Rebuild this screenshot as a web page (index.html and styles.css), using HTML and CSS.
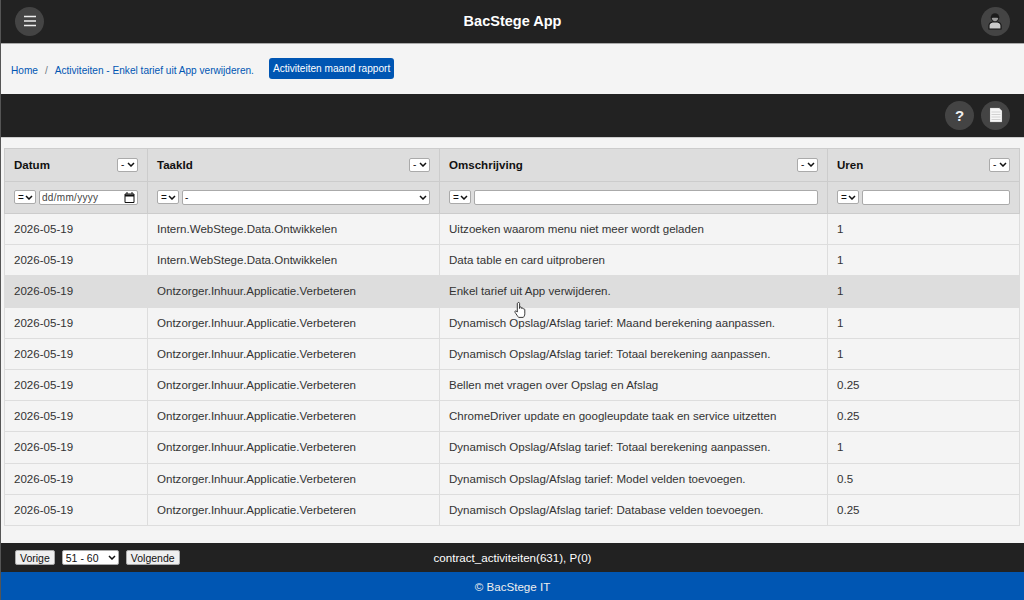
FILE: index.html
```html
<!DOCTYPE html>
<html lang="nl">
<head>
    <meta charset="UTF-8">
    <meta name="viewport" content="width=device-width, initial-scale=1.0">
    <title>BacStege App</title>
    <link rel="stylesheet" href="styles.css">
</head>
<body>
    <header class="app-header">
        <button class="round-btn" aria-label="Menu">
            <svg width="12" height="12" viewBox="0 0 12 12"><path d="M0 1.500h12M0 6h12M0 10.500h12" stroke="#eee" stroke-width="1.700" fill="none"/></svg>
        </button>
        <h1 class="app-title">BacStege App</h1>
        <button class="round-btn" aria-label="Account">
            <svg width="16" height="18" viewBox="0 0 16 18"><path d="M2 17v-3.500c0-2 1.500-3 3.500-3.500h5c2 .5 3.500 1.500 3.500 3.500V17z" fill="#c9c9c9" stroke="#111" stroke-width="1.100"/><circle cx="8" cy="5.500" r="4.300" fill="#1c1c1c"/><path d="M4.800 6c1.500-.2 4.800-.2 6.400 0-.1 2-1.400 3.200-3.200 3.200S4.900 8 4.800 6z" fill="#9a9a9a"/></svg>
        </button>
    </header>

    <nav class="breadcrumb">
        <a href="#">Home</a>
        <span class="sep">/</span>
        <a href="#">Activiteiten - Enkel tarief uit App verwijderen.</a>
        <a href="#" class="report-btn">Activiteiten maand rapport</a>
    </nav>

    <div class="toolbar">
        <button class="round-btn help" aria-label="Help">?</button>
        <button class="round-btn" aria-label="Document">
            <svg width="14" height="16" viewBox="0 0 14 16"><path d="M.6.600h9.600l3.200 3.200v11.600H.6z" fill="#f6f6f6" stroke="#111" stroke-width=".6"/><path d="M2.500 5h9M2.500 7.500h9M2.500 10h9M2.500 12.500h9" stroke="#d2d2d2"/></svg>
        </button>
    </div>

    <main class="content">
        <table class="data-table">
            <colgroup>
                <col class="col-date"><col class="col-task"><col class="col-desc"><col>
            </colgroup>
            <thead>
                <tr class="head-row">
                    <th><div class="th-inner">Datum <select class="mini"><option>-</option></select></div></th>
                    <th><div class="th-inner">TaakId <select class="mini"><option>-</option></select></div></th>
                    <th><div class="th-inner">Omschrijving <select class="mini"><option>-</option></select></div></th>
                    <th><div class="th-inner">Uren <select class="mini"><option>-</option></select></div></th>
                </tr>
                <tr class="filter-row">
                    <th><div class="filter">
                        <select class="op"><option>=</option></select>
                        <div class="date-field"><input type="text" value="dd/mm/yyyy" aria-label="Datum">
                            <svg width="11" height="11" viewBox="0 0 11 11" fill="none" stroke="#111"><path d="M1 2h9v8.500H1z"/><path d="M1 3.500h9" stroke-width="2"/><path d="M3 0v2M8 0v2"/></svg>
                        </div>
                    </div></th>
                    <th><div class="filter">
                        <select class="op"><option>=</option></select>
                        <select class="grow"><option>-</option></select>
                    </div></th>
                    <th><div class="filter">
                        <select class="op"><option>=</option></select>
                        <input class="grow" type="text">
                    </div></th>
                    <th><div class="filter">
                        <select class="op"><option>=</option></select>
                        <input class="grow" type="text">
                    </div></th>
                </tr>
            </thead>
            <tbody>
                <tr><td>2026-05-19</td><td>Intern.WebStege.Data.Ontwikkelen</td><td>Uitzoeken waarom menu niet meer wordt geladen</td><td>1</td></tr>
                <tr><td>2026-05-19</td><td>Intern.WebStege.Data.Ontwikkelen</td><td>Data table en card uitproberen</td><td>1</td></tr>
                <tr class="hover"><td>2026-05-19</td><td>Ontzorger.Inhuur.Applicatie.Verbeteren</td><td>Enkel tarief uit App verwijderen.</td><td>1</td></tr>
                <tr><td>2026-05-19</td><td>Ontzorger.Inhuur.Applicatie.Verbeteren</td><td>Dynamisch Opslag/Afslag tarief: Maand berekening aanpassen.</td><td>1</td></tr>
                <tr><td>2026-05-19</td><td>Ontzorger.Inhuur.Applicatie.Verbeteren</td><td>Dynamisch Opslag/Afslag tarief: Totaal berekening aanpassen.</td><td>1</td></tr>
                <tr><td>2026-05-19</td><td>Ontzorger.Inhuur.Applicatie.Verbeteren</td><td>Bellen met vragen over Opslag en Afslag</td><td>0.25</td></tr>
                <tr><td>2026-05-19</td><td>Ontzorger.Inhuur.Applicatie.Verbeteren</td><td>ChromeDriver update en googleupdate taak en service uitzetten</td><td>0.25</td></tr>
                <tr><td>2026-05-19</td><td>Ontzorger.Inhuur.Applicatie.Verbeteren</td><td>Dynamisch Opslag/Afslag tarief: Totaal berekening aanpassen.</td><td>1</td></tr>
                <tr><td>2026-05-19</td><td>Ontzorger.Inhuur.Applicatie.Verbeteren</td><td>Dynamisch Opslag/Afslag tarief: Model velden toevoegen.</td><td>0.5</td></tr>
                <tr><td>2026-05-19</td><td>Ontzorger.Inhuur.Applicatie.Verbeteren</td><td>Dynamisch Opslag/Afslag tarief: Database velden toevoegen.</td><td>0.25</td></tr>
            </tbody>
        </table>
        <svg class="hand-cursor" width="13" height="18" viewBox="0 0 13 17"><path d="M4 1.200c.8-.6 1.600-.2 1.600.8v5l.2-1.200c.7-.7 1.600-.4 1.700.5l.1.600c.7-.6 1.500-.3 1.600.6.7-.4 1.500-.1 1.600.8v4c0 1.600-.8 2.800-1.500 3.600H4.600C3.600 14.800 2.400 12.800 1 10.800c-.5-.8.3-1.800 1.400-1.200l.9 1V2.200c0-.4.2-.8.700-1z" fill="#fff" stroke="#222" stroke-width=".9"/></svg>
    </main>

    <div class="pager">
        <div class="pager-controls">
            <button>Vorige</button>
            <select><option>51 - 60</option></select>
            <button>Volgende</button>
        </div>
        <span class="pager-info">contract_activiteiten(631), P(0)</span>
    </div>

    <footer class="app-footer">© BacStege IT</footer>
</body>
</html>
```

FILE: styles.css
```css
* {
    box-sizing: border-box;
}
html, body {
    height: 100%;
}
body {
    margin: 0;
    display: flex;
    flex-direction: column;
    font-family: "Liberation Sans", Arial, sans-serif;
    font-size: 12px;
    color: #222;
    background: #f4f4f4;
    border-left: 1px solid #555;
    overflow: hidden;
}
.app-header {
    height: 44px;
    flex: none;
    display: flex;
    align-items: center;
    justify-content: space-between;
    padding: 0 14px 1px 14px;
    background: #222;
    border-bottom: 1px solid #aaa;
}
.app-title {
    margin: 0;
    font-size: 14.5px;
    font-weight: bold;
    color: #fff;
}
.round-btn {
    width: 29px;
    height: 29px;
    padding: 0;
    display: flex;
    align-items: center;
    justify-content: center;
    border: 0;
    border-radius: 50%;
    background: #444;
    color: #fff;
}
.round-btn.help {
    font: bold 15px "Liberation Sans", Arial, sans-serif;
    color: #f0f0f0;
}
.breadcrumb {
    height: 50px;
    flex: none;
    display: flex;
    align-items: center;
    padding: 2px 0 0 10px;
    background: #f4f4f4;
    font-size: 10.1px;
}
.breadcrumb a {
    color: #0056b3;
    text-decoration: none;
}
.breadcrumb .sep {
    margin: 0 7px;
    color: #6c757d;
}
.breadcrumb .report-btn {
    margin: -3px 0 0 15px;
    padding: 3px 4px;
    height: 21px;
    line-height: 15px;
    color: #fff;
    background: #0056b3;
    border-radius: 3px;
}
.toolbar {
    height: 44px;
    flex: none;
    display: flex;
    align-items: center;
    justify-content: flex-end;
    gap: 7px;
    padding: 0 14px 1px 0;
    background: #222;
    border-bottom: 1px solid #ccc;
}
.content {
    position: relative;
    flex: 1;
    padding: 10px 3px 0 3px;
}
.data-table {
    width: 1016px;
    height: 377px;
    table-layout: fixed;
    border-collapse: collapse;
    border: 1px solid #ddd;
}
.col-date { width: 143px; }
.col-task { width: 292px; }
.col-desc { width: 388px; }
.data-table th, .data-table td {
    border: 1px solid #ddd;
    padding: 0 9px;
    text-align: left;
}
.data-table thead th {
    background: #ddd;
    border-color: #ccc;
    color: #111;
    font-size: 11.55px;
    height: 32.500px;
}
.data-table td {
    height: 31.200px;
    font-size: 11.55px;
    color: #333;
    background: #f4f4f4;
}
.data-table tr.hover td {
    background: #ddd;
}
.th-inner {
    display: flex;
    align-items: center;
    justify-content: space-between;
}
.filter {
    display: flex;
    align-items: center;
    gap: 3px;
}
select, input, .pager button {
    font-family: "Liberation Sans", Arial, sans-serif;
    font-size: 10px;
    color: #111;
    background-color: #fff;
    border: 1px solid #aaa;
    border-radius: 2px;
}
select {
    appearance: none;
    padding: 0 0 0 3px;
    background-image: url("data:image/svg+xml,%3Csvg xmlns='http://www.w3.org/2000/svg' width='8' height='5'%3E%3Cpath d='M1 1l3 3 3-3' fill='none' stroke='%23111' stroke-width='1.500'/%3E%3C/svg%3E");
    background-repeat: no-repeat;
    background-position: right 2px center;
}
.mini {
    width: 21px;
    height: 14px;
}
.op {
    width: 22px;
    height: 14px;
    flex: none;
}
.grow {
    flex: 1;
    min-width: 0;
    height: 15px;
    padding: 0 2px;
}
.date-field {
    flex: 1;
    min-width: 0;
    height: 15px;
    display: flex;
    align-items: center;
    padding: 0 2px;
    background: #fff;
    border: 1px solid #aaa;
    border-radius: 2px;
}
.date-field input {
    flex: 1;
    min-width: 0;
    height: 12px;
    padding: 0;
    border: 0;
    background: transparent;
    letter-spacing: 0.3px;
    color: #444;
}
.hand-cursor {
    position: absolute;
    left: 513px;
    top: 163px;
}
.pager {
    position: relative;
    height: 29px;
    flex: none;
    display: flex;
    align-items: center;
    justify-content: center;
    background: #222;
    color: #fff;
}
.pager-controls {
    position: absolute;
    left: 14px;
    top: 7px;
    display: flex;
    align-items: center;
    gap: 7px;
}
.pager button {
    height: 15px;
    padding: 0 4px;
    background: #efefef;
    font-size: 10.5px;
}
.pager select {
    width: 57px;
    height: 15px;
    font-size: 10.500px;
}
.pager-info {
    font-size: 11.6px;
}
.app-footer {
    height: 28px;
    flex: none;
    display: flex;
    align-items: center;
    justify-content: center;
    background: #0056b3;
    color: #eee;
    font-size: 11.6px;
}
```
